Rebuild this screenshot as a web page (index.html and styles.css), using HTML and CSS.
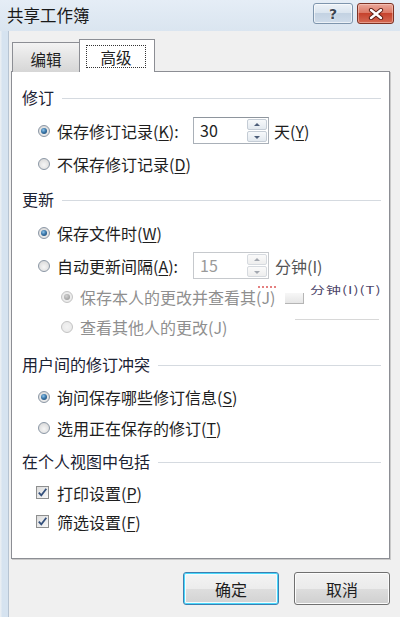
FILE: index.html
```html
<!DOCTYPE html>
<html lang="zh-CN">
<head>
<meta charset="utf-8">
<title>共享工作簿</title>
<link rel="stylesheet" href="styles.css">
</head>
<body>
<div class="window">
  <div class="titlebar">
    <span class="title">共享工作簿</span>
    <div class="caption-btns">
      <div class="cbtn help"><span>?</span></div>
      <div class="cbtn close">
        <svg width="16" height="12" viewBox="0 0 16 12"><path d="M3 2 L13 10 M13 2 L3 10" stroke="#5a1c12" stroke-width="4.2" stroke-linecap="round"/><path d="M3 2 L13 10 M13 2 L3 10" stroke="#ffffff" stroke-width="2.4" stroke-linecap="round"/></svg>
      </div>
    </div>
  </div>
  <div class="client">
    <div class="tabs">
      <div class="tab">编辑</div>
      <div class="tab active"><span class="focus">高级</span></div>
    </div>
    <div class="panel">
      <div class="sec">
        <div class="hdr"><span>修订</span><i class="line"></i></div>
        <div class="opt">
          <span class="radio on"></span>
          <span class="lbl fixed">保存修订记录(<u>K</u>):</span>
          <span class="spin"><span class="val">30</span><span class="arrows"><b class="up"></b><b class="dn"></b></span></span>
          <span class="unit">天(<u>Y</u>)</span>
        </div>
        <div class="opt"><span class="radio"></span><span class="lbl">不保存修订记录(<u>D</u>)</span></div>
      </div>
      <div class="sec s2">
        <div class="hdr"><span>更新</span><i class="line"></i></div>
        <div class="opt"><span class="radio on"></span><span class="lbl">保存文件时(<u>W</u>)</span></div>
        <div class="opt">
          <span class="radio"></span>
          <span class="lbl fixed">自动更新间隔(<u>A</u>):</span>
          <span class="spin disabled"><span class="val">15</span><span class="arrows"><b class="up"></b><b class="dn"></b></span></span>
          <span class="unit dim">分钟(I)</span>
        </div>
        <div class="sub"><span class="radio gray on"></span><span class="lbl">保存本人的更改并查看其(J)</span></div>
        <div class="sub"><span class="radio gray"></span><span class="lbl">查看其他人的更改(J)</span></div>
      </div>
      <div class="sec s3">
        <div class="hdr"><span>用户间的修订冲突</span><i class="line"></i></div>
        <div class="opt"><span class="radio on"></span><span class="lbl">询问保存哪些修订信息(<u>S</u>)</span></div>
        <div class="opt"><span class="radio"></span><span class="lbl">选用正在保存的修订(<u>T</u>)</span></div>
      </div>
      <div class="sec s4">
        <div class="hdr"><span>在个人视图中包括</span><i class="line"></i></div>
        <div class="chk"><span class="box"><svg width="11" height="11" viewBox="0 0 11 11"><path d="M1.8 5.6 L4.3 8.3 L9.3 1.8" fill="none" stroke="#34507c" stroke-width="1.8"/></svg></span><span class="lbl">打印设置(<u>P</u>)</span></div>
        <div class="chk"><span class="box"><svg width="11" height="11" viewBox="0 0 11 11"><path d="M1.8 5.6 L4.3 8.3 L9.3 1.8" fill="none" stroke="#34507c" stroke-width="1.8"/></svg></span><span class="lbl">筛选设置(<u>F</u>)</span></div>
      </div>
      <div class="ghost-dots"></div>
      <div class="ghost-box"></div>
      <div class="ghost-text">分钟(I)(T)</div>
      <div class="ghost-line"></div>
    </div>
    <div class="buttons">
      <div class="btn default">确定</div>
      <div class="btn">取消</div>
    </div>
  </div>
</div>
</body>
</html>
```
FILE: styles.css
```css
html, body {
  margin: 0;
  padding: 0;
  background: #f0f0f0;
}
body {
  font-family: "Noto Sans CJK SC", "Noto Sans", "Liberation Sans", sans-serif;
  color: #1e1e1e;
}
.window {
  width: 400px;
  height: 617px;
  display: flex;
  flex-direction: column;
  overflow: hidden;
  background: linear-gradient(90deg, #e9eef3 0, #e9eef3 1px, #d6e3f0 2px, #d6e3f0 100%);
}
.titlebar {
  height: 31px;
  flex: none;
  display: flex;
  justify-content: space-between;
  align-items: flex-start;
  padding: 0 6px 0 7px;
  background: linear-gradient(#e5edf6, #dae5f0);
}
.title {
  font-size: 16.5px;
  line-height: 31px;
  color: #1a1a1a;
}
.caption-btns {
  display: flex;
  gap: 4px;
  margin-top: 3px;
}
.cbtn {
  height: 21px;
  box-sizing: border-box;
  border-radius: 3px;
  display: flex;
  align-items: center;
  justify-content: center;
}
.help {
  width: 40px;
  border: 1px solid #7e95ad;
  background: linear-gradient(#edf2f8 0, #dbe5ef 45%, #c3d2e2 50%, #cfdcea 100%);
  box-shadow: inset 0 0 0 1px rgba(255,255,255,0.6);
}
.help span {
  font-family: "DejaVu Sans", sans-serif;
  font-weight: bold;
  font-size: 14px;
  line-height: 1;
  color: #3d4652;
  text-shadow: 0 0 2px #fff, 0 0 1px #fff;
}
.close {
  width: 37px;
  border: 1px solid #7d3326;
  background: linear-gradient(#eaa89b 0, #dc7a67 45%, #c6432d 50%, #d46a55 100%);
  box-shadow: inset 0 0 0 1px rgba(255,220,210,0.45);
}
.client {
  flex: 1;
  margin-left: 8px;
  border-left: 1px solid #b7c4d2;
  background: #f0f0f0;
  padding: 8px 10px 0 2px;
  display: flex;
  flex-direction: column;
}
.tabs {
  height: 33px;
  display: flex;
  align-items: flex-end;
  padding-left: 1px;
  position: relative;
  z-index: 1;
  margin-bottom: -1px;
}
.tab {
  width: 68px;
  height: 30px;
  box-sizing: border-box;
  border: 1px solid #8c8e94;
  border-bottom: none;
  background: linear-gradient(#f3f3f3, #e4e4e4 50%, #d6d6d6);
  font-size: 15.5px;
  display: flex;
  align-items: center;
  justify-content: center;
  color: #1e1e1e;
  padding-top: 2px;
}
.tab.active {
  width: 76px;
  height: 33px;
  margin-left: -1px;
  background: #ffffff;
  padding: 5px 8px 4px 6px;
}
.focus {
  flex: 1;
  height: 100%;
  box-sizing: border-box;
  border: 1px dotted #333;
  display: flex;
  align-items: center;
  justify-content: center;
}
.panel {
  position: relative;
  height: 488px;
  box-sizing: border-box;
  border: 1px solid #8c8e94;
  box-shadow: 1px 1px 0 #c9c9c9;
  background: #ffffff;
  padding: 8px 8px 0 10px;
  font-size: 16px;
}
.sec {
  display: flex;
  flex-direction: column;
}
.s2 { margin-top: 2px; }
.s3 { margin-top: 5px; }
.s3 .opt { height: 31px; }
.s4 { margin-top: 1px; }
.hdr {
  height: 34px;
  display: flex;
  align-items: center;
  gap: 8px;
  color: #1b2233;
}
.line {
  flex: 1;
  height: 1px;
  background: #d5dae0;
  margin-top: 2px;
}
.opt, .sub, .chk {
  display: flex;
  align-items: center;
  height: 33px;
}
.opt { padding-left: 16px; }
.sub { padding-left: 39px; height: 30px; color: #8f8f8f; }
.chk { padding-left: 14px; height: 29px; }
.lbl { margin-left: 7px; white-space: nowrap; }
.chk .lbl { margin-left: 8px; }
.lbl.fixed { width: 136px; }
u { text-underline-offset: 2px; }
.radio {
  width: 12px;
  height: 12px;
  flex: none;
  box-sizing: border-box;
  border-radius: 50%;
  border: 1px solid #8b97a5;
  background: radial-gradient(circle at 50% 60%, #f6f6f6 0, #e3e3e3 55%, #cfcfcf 100%);
  position: relative;
}
.radio.on::after {
  content: "";
  position: absolute;
  left: 2px;
  top: 2px;
  width: 6px;
  height: 6px;
  border-radius: 50%;
  background: radial-gradient(circle at 40% 35%, #8fc4ea 0, #3b78aa 45%, #173c63 100%);
}
.radio.gray {
  border-color: #c3c3c3;
  background: radial-gradient(circle, #f3f3f3 0, #e6e6e6 100%);
}
.radio.gray.on::after {
  background: radial-gradient(circle at 40% 35%, #d2d2d2 0, #a9a9a9 60%, #8f8f8f 100%);
}
.spin {
  width: 76px;
  height: 27px;
  flex: none;
  box-sizing: border-box;
  border: 1px solid #a9b0b8;
  border-top-color: #8e959d;
  background: #fff;
  display: flex;
  align-items: stretch;
}
.val {
  flex: 1;
  padding-left: 6px;
  line-height: 25px;
  font-size: 16px;
  color: #1e1e1e;
}
.arrows {
  width: 20px;
  display: flex;
  flex-direction: column;
  gap: 1px;
  padding: 1px 1px 1px 0;
}
.arrows b {
  flex: 1;
  border: 1px solid #c4ccd5;
  border-radius: 2px;
  background: linear-gradient(#f7f9fb, #e3e9ef);
  position: relative;
}
.arrows b::after {
  content: "";
  position: absolute;
  left: 50%;
  top: 50%;
  margin-left: -3px;
  border-left: 3px solid transparent;
  border-right: 3px solid transparent;
}
.arrows .up::after {
  margin-top: -2px;
  border-bottom: 3px solid #4c5d78;
}
.arrows .dn::after {
  margin-top: -1px;
  border-top: 3px solid #4c5d78;
}
.spin.disabled {
  border-color: #c6c9cd;
}
.spin.disabled .val { color: #9a9a9a; }
.spin.disabled .arrows b { border-color: #d6dadf; background: linear-gradient(#fafafa, #eeeeee); }
.spin.disabled .arrows .up::after { border-bottom-color: #a3a8b0; }
.spin.disabled .arrows .dn::after { border-top-color: #a3a8b0; }
.unit { margin-left: 5px; white-space: nowrap; }
.unit.dim { margin-left: 6px; color: #555; }
.box {
  width: 13px;
  height: 13px;
  flex: none;
  box-sizing: border-box;
  border: 1px solid #8e8f8f;
  background: linear-gradient(135deg, #dcdcdc, #f8f8f8);
  display: flex;
  align-items: center;
  justify-content: center;
}
.ghost-dots {
  position: absolute;
  left: 246px;
  top: 214px;
  width: 18px;
  height: 0;
  border-top: 2px dotted #e48080;
}
.ghost-box {
  position: absolute;
  left: 273px;
  top: 221px;
  width: 19px;
  height: 11px;
  box-sizing: border-box;
  border-right: 1px solid #b5b5b5;
  border-bottom: 1px solid #b5b5b5;
  background: linear-gradient(#f7f7f7, #e6e6e6);
}
.ghost-text {
  position: absolute;
  left: 298px;
  top: 212px;
  font-size: 15px;
  line-height: 16px;
  letter-spacing: 1px;
  color: #4c4468;
  white-space: nowrap;
  transform: scaleY(0.72);
  transform-origin: top left;
}
.ghost-line {
  position: absolute;
  left: 283px;
  top: 247px;
  width: 84px;
  height: 1px;
  background: #d8d8d8;
}
.buttons {
  display: flex;
  justify-content: flex-end;
  gap: 15px;
  margin-top: 13px;
}
.btn {
  width: 96px;
  height: 33px;
  box-sizing: border-box;
  border: 1px solid #707070;
  border-radius: 3px;
  background: linear-gradient(#f2f2f2 0, #ebebeb 50%, #dddddd 51%, #cfcfcf 100%);
  box-shadow: inset 0 0 0 1px #fcfcfc;
  font-size: 16px;
  display: flex;
  align-items: center;
  justify-content: center;
  color: #1e1e1e;
}
.btn.default {
  border-color: #3c7fb1;
  box-shadow: inset 0 0 0 1px #48d8fb, inset 0 0 0 2px #f4fbfe;
  background: linear-gradient(#f4f4f4 0, #ececec 50%, #dedede 51%, #d2d2d2 100%);
}
```
